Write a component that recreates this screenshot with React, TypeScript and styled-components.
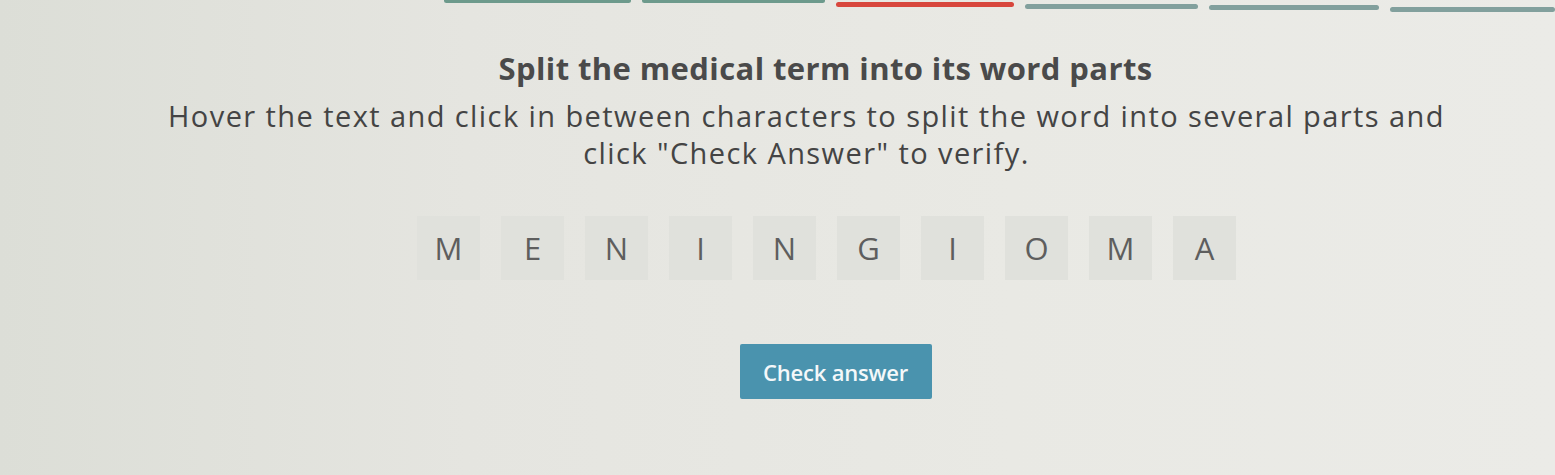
import React from "react";
import styled, { createGlobalStyle } from "styled-components";

const GlobalStyle = createGlobalStyle`
  html, body {
    margin: 0;
    padding: 0;
  }
  body {
    width: 1555px;
    height: 475px;
    overflow: hidden;
    font-family: "Open Sans", "Noto Sans", sans-serif;
    background: linear-gradient(90deg, #dcded7 0%, #e5e5e0 30%, #e9e9e4 65%, #ebebe7 100%);
  }
`;

const Page = styled.div`
  display: flex;
  flex-direction: column;
  align-items: center;
  padding-left: 96px;
  height: 475px;
  box-sizing: border-box;
`;

const Progress = styled.div`
  display: flex;
  gap: 11px;
  align-self: stretch;
  padding-left: 348px;
  height: 12px;
`;

const Step = styled.div<{ $color: string; $top: number; $width: number }>`
  width: ${(p) => p.$width}px;
  height: 5px;
  margin-top: ${(p) => p.$top}px;
  border-radius: 3px;
  background: ${(p) => p.$color};
`;

const Title = styled.h1`
  margin: 36px 0 0;
  font-size: 31px;
  font-weight: 700;
  letter-spacing: 0.4px;
  line-height: 40px;
  color: #4a4a4a;
  text-align: center;
`;

const Instructions = styled.p`
  margin: 9px 0 0 -38px;
  width: 1290px;
  font-size: 29px;
  font-weight: 400;
  letter-spacing: 1.42px;
  line-height: 37px;
  color: #444;
  text-align: center;
`;

const Word = styled.div`
  display: flex;
  gap: 21px;
  margin-top: 45px;
  margin-left: 2px;
`;

const Tile = styled.div`
  width: 63px;
  height: 64px;
  display: flex;
  align-items: center;
  justify-content: center;
  background: #e0e1dc;
  font-size: 31px;
  color: #5e5e5e;
`;

const CheckButton = styled.button`
  margin: 64px 0 0 20px;
  width: 192px;
  height: 55px;
  border: none;
  border-radius: 2px;
  background: #4a93ae;
  color: #f4f8fa;
  font-family: "Open Sans", "Noto Sans", sans-serif;
  font-size: 22px;
  font-weight: 600;
  letter-spacing: -0.2px;
  cursor: pointer;
`;

const steps = [
  { color: "#6d9a8c", top: -2, width: 187 },
  { color: "#6d9a8c", top: -2, width: 183 },
  { color: "#d8473d", top: 2, width: 178 },
  { color: "#82a09d", top: 4, width: 173 },
  { color: "#82a09d", top: 5, width: 170 },
  { color: "#82a09d", top: 7, width: 165 },
];

const letters = ["M", "E", "N", "I", "N", "G", "I", "O", "M", "A"];

export default function App() {
  return (
    <>
      <GlobalStyle />
      <Page>
        <Progress>
          {steps.map((s, i) => (
            <Step key={i} $color={s.color} $top={s.top} $width={s.width} />
          ))}
        </Progress>
        <Title>Split the medical term into its word parts</Title>
        <Instructions>
          Hover the text and click in between characters to split the word into several parts and
          click "Check Answer" to verify.
        </Instructions>
        <Word>
          {letters.map((l, i) => (
            <Tile key={i}>{l}</Tile>
          ))}
        </Word>
        <CheckButton>Check answer</CheckButton>
      </Page>
    </>
  );
}
